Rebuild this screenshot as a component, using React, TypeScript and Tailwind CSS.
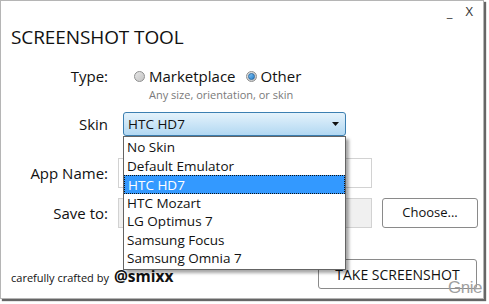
import React from 'react';

const skins = ['No Skin', 'Default Emulator', 'HTC HD7', 'HTC Mozart', 'LG Optimus 7', 'Samsung Focus', 'Samsung Omnia 7'];

function Radio({ checked }: { checked?: boolean }) {
  return (
    <span className="relative inline-flex w-[11px] h-[11px] rounded-full border border-[#8e8f8f] bg-gradient-to-br from-[#e6e6e6] to-[#c4c4c4] items-center justify-center">
      {checked && (
        <span className="w-[7px] h-[7px] rounded-full bg-gradient-to-br from-[#7fc3f4] to-[#1f7fcc] border border-[#2a6aa3]" />
      )}
    </span>
  );
}

export default function App() {
  return (
    <div className="w-[489px] h-[304px] bg-white overflow-hidden font-['Open_Sans',sans-serif] text-[#111]">
      <div className="w-[484px] h-[299px] bg-white border border-[#b5b5b5] shadow-[2px_2px_1px_rgba(0,0,0,0.6)] flex flex-col relative">
        {/* window buttons */}
        <div className="flex justify-end items-start h-[25px] pr-[10px] pt-[4px] gap-[13px] text-[13px] text-[#333]">
          <span className="leading-[13px] mt-[1px]">_</span>
          <span className="leading-[13px]">X</span>
        </div>

        <h1 className="pl-[10px] text-[19px] leading-[22px] tracking-[-0.1px] font-normal">SCREENSHOT TOOL</h1>

        {/* Type */}
        <div className="flex items-center mt-[17px] h-[22px]">
          <div className="w-[107px] text-right text-[15px]">Type:</div>
          <div className="ml-[26px] flex items-center text-[15px]">
            <Radio />
            <span className="ml-[4px]">Marketplace</span>
            <span className="ml-[10px] flex items-center">
              <Radio checked />
            </span>
            <span className="ml-[4px]">Other</span>
          </div>
        </div>
        <div className="pl-[148px] text-[11px] leading-[14px] text-[#7a7a7a] mt-[1px]">Any size, orientation, or skin</div>

        {/* Skin */}
        <div className="flex items-center mt-[10px] h-[24px]">
          <div className="w-[107px] text-right text-[15px]">Skin</div>
          <div className="ml-[15px] relative w-[223px] h-[24px] z-10">
            <div className="h-full rounded-[3px] border border-[#3c7fb1] bg-gradient-to-b from-[#e4f2fb] to-[#b2d8f2] flex items-center justify-between pl-[4px] pr-[6px] text-[13.5px]">
              <span>HTC HD7</span>
              <svg width="7" height="4" viewBox="0 0 7 4"><path d="M0 0h7L3.5 4z" fill="#111" /></svg>
            </div>
            <div className="absolute left-0 top-[24px] w-[223px] bg-white border border-[#646464] shadow-[3px_3px_3px_rgba(0,0,0,0.35)] py-[1px]">
              {skins.map((s) => (
                <div
                  key={s}
                  className={`h-[18.5px] leading-[18.5px] pl-[3px] text-[13.5px] ${s === 'HTC HD7' ? 'bg-[#3399ff] text-white border border-dotted border-[#111] pl-[2px] leading-[16.5px]' : ''}`}
                >
                  {s}
                </div>
              ))}
            </div>
          </div>
        </div>

        {/* App Name */}
        <div className="flex items-center mt-[22px] h-[30px]">
          <div className="w-[107px] text-right text-[15px]">App Name:</div>
          <div className="ml-[10px] w-[254px] h-[30px] border border-[#d2d2d2] bg-white" />
        </div>

        {/* Save to */}
        <div className="flex items-center mt-[10px] h-[30px]">
          <div className="w-[107px] text-right text-[15px]">Save to:</div>
          <div className="ml-[10px] w-[254px] h-[30px] border border-[#d2d2d2] bg-[#f0f0f0]" />
          <button className="ml-[10px] w-[96px] h-[30px] rounded-[3px] border border-[#8a8a8a] bg-white text-[13px]">Choose...</button>
        </div>

        {/* footer */}
        <div className="flex items-center justify-between mt-[31px] h-[30px] pl-[10px] pr-[6px]">
          <div className="flex items-baseline text-[11px] mt-[6px]">
            <span>carefully crafted by</span>
            <span className="ml-[5px] text-[15.5px] font-bold">@smixx</span>
          </div>
          <button className="w-[159px] h-[30px] rounded-[3px] border border-[#8a8a8a] bg-white text-[14px]">TAKE SCREENSHOT</button>
        </div>

        <div className="absolute right-[1px] bottom-[1px] text-[17px] leading-[18px] text-[#a0a0a0] font-['Liberation_Sans',sans-serif] tracking-[-0.5px]">Gnie</div>
      </div>
    </div>
  );
}
